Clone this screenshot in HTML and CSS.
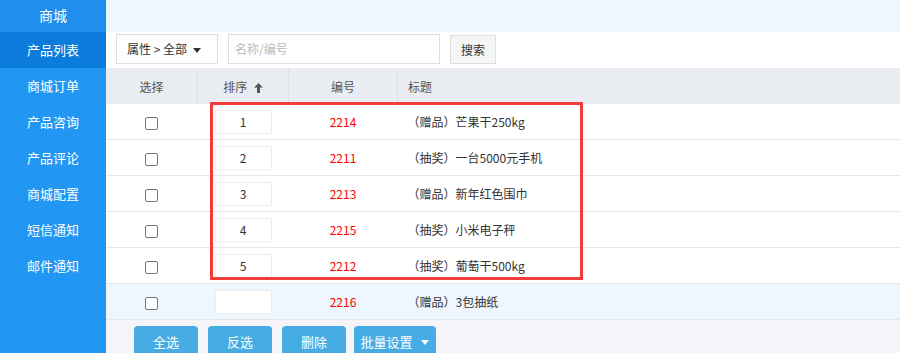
FILE: index.html
```html
<!DOCTYPE html>
<html lang="zh-CN">
<head>
  <meta charset="UTF-8">
  <title>产品列表</title>
  <link rel="stylesheet" href="styles.css">
</head>
<body>
  <div class="layout">
    <div class="sidebar">
      <div class="brand">商城</div>
      <div class="nav-item active">产品列表</div>
      <div class="nav-item">商城订单</div>
      <div class="nav-item">产品咨询</div>
      <div class="nav-item">产品评论</div>
      <div class="nav-item">商城配置</div>
      <div class="nav-item">短信通知</div>
      <div class="nav-item">邮件通知</div>
    </div>

    <div class="main">
      <div class="topbar"></div>
      <div class="toolbar">
        <div class="select">属性 &gt; 全部 <span class="caret"></span></div>
        <input class="search-input" type="text" placeholder="名称/编号">
        <button class="search-btn">搜索</button>
      </div>

      <table class="grid">
        <thead>
          <tr>
            <th class="col-check">选择</th>
            <th class="col-sort">排序 <svg class="sort-icon" width="9" height="10" viewBox="0 0 9 10"><path d="M4.5 0 L9 4.5 L6 4.5 L6 10 L3 10 L3 4.5 L0 4.5 Z" fill="#555"/></svg></th>
            <th class="col-code">编号</th>
            <th class="col-title">标题</th>
          </tr>
        </thead>
        <tbody>
          <tr>
            <td class="col-check"><span class="checkbox"></span></td>
            <td class="col-sort"><input class="sort-input" type="text" value="1"></td>
            <td class="col-code">2214</td>
            <td class="col-title">（赠品）芒果干250kg</td>
          </tr>
          <tr>
            <td class="col-check"><span class="checkbox"></span></td>
            <td class="col-sort"><input class="sort-input" type="text" value="2"></td>
            <td class="col-code">2211</td>
            <td class="col-title">（抽奖）一台5000元手机</td>
          </tr>
          <tr>
            <td class="col-check"><span class="checkbox"></span></td>
            <td class="col-sort"><input class="sort-input" type="text" value="3"></td>
            <td class="col-code">2213</td>
            <td class="col-title">（赠品）新年红色围巾</td>
          </tr>
          <tr>
            <td class="col-check"><span class="checkbox"></span></td>
            <td class="col-sort"><input class="sort-input" type="text" value="4"></td>
            <td class="col-code">2215</td>
            <td class="col-title">（抽奖）小米电子秤</td>
          </tr>
          <tr>
            <td class="col-check"><span class="checkbox"></span></td>
            <td class="col-sort"><input class="sort-input" type="text" value="5"></td>
            <td class="col-code">2212</td>
            <td class="col-title">（抽奖）葡萄干500kg</td>
          </tr>
          <tr class="hover">
            <td class="col-check"><span class="checkbox"></span></td>
            <td class="col-sort"><input class="sort-input" type="text" value=""></td>
            <td class="col-code">2216</td>
            <td class="col-title">（赠品）3包抽纸</td>
          </tr>
        </tbody>
      </table>

      <div class="footer">
        <button class="btn">全选</button>
        <button class="btn">反选</button>
        <button class="btn">删除</button>
        <button class="btn btn-wide">批量设置 <span class="caret white"></span></button>
      </div>

      <div class="highlight"></div>
    </div>
  </div>
</body>
</html>
```

FILE: styles.css
```css
body {
  margin: 0;
  font-family: "Noto Sans CJK SC", "Liberation Sans", sans-serif;
  font-size: 12px;
  color: #333;
  background: #f4f4f9;
  height: 353px;
  overflow: hidden;
}

.layout {
  display: flex;
  height: 353px;
}

.sidebar {
  width: 106px;
  flex-shrink: 0;
  background-color: #2196f3;
  color: #fff;
}

.brand {
  height: 32px;
  line-height: 30px;
  text-align: center;
  font-size: 14px;
  background-color: #1f8eed;
}

.nav-item {
  height: 36px;
  line-height: 36px;
  text-align: center;
  font-size: 13px;
}

.nav-item.active {
  background-color: #0b7cdb;
}

.main {
  flex: 1;
  position: relative;
  display: flex;
  flex-direction: column;
  overflow: hidden;
}

.main > * {
  flex-shrink: 0;
}

.topbar {
  height: 32px;
  background-color: #eef6fe;
}

.toolbar {
  height: 36px;
  background: #fff;
  display: flex;
  align-items: center;
  padding-left: 10px;
  box-sizing: border-box;
}

.select {
  width: 102px;
  height: 30px;
  box-sizing: border-box;
  border: 1px solid #ddd;
  line-height: 28px;
  padding-left: 10px;
  font-size: 12px;
  color: #333;
  margin-right: 10px;
  margin-top: -3px;
}

.caret {
  display: inline-block;
  width: 0;
  height: 0;
  border-left: 4px solid transparent;
  border-right: 4px solid transparent;
  border-top: 5px solid #333;
  vertical-align: middle;
  margin-left: 3px;
}

.caret.white {
  border-top-color: #fff;
  margin-left: 6px;
}

.search-input {
  width: 212px;
  height: 30px;
  box-sizing: border-box;
  border: 1px solid #ddd;
  padding: 0 6px;
  font-family: inherit;
  font-size: 12px;
  margin-right: 10px;
  margin-top: -3px;
  outline: none;
}

.search-input::placeholder {
  color: #bbb;
}

.search-btn {
  width: 46px;
  height: 29px;
  box-sizing: border-box;
  border: 1px solid #ddd;
  background: #f5f5f5;
  font-family: inherit;
  font-size: 12px;
  color: #333;
  padding: 0;
  margin-top: -2px;
}

.grid {
  border-collapse: collapse;
  width: 100%;
  table-layout: fixed;
  background: #fff;
}

.grid th {
  height: 36px;
  background-color: #e9ecf1;
  font-weight: normal;
  color: #555;
  border-left: 1px solid #dde1e7;
  padding: 0;
}

.grid th:first-child {
  border-left: none;
}

.grid td {
  height: 35px;
  border-bottom: 1px solid #e3e7ec;
  padding: 0;
  text-align: center;
}

.grid tr.hover td {
  background-color: #eef6fe;
}

.col-check { width: 91px; text-align: center; }
.col-sort { width: 90px; text-align: center; }
.col-code { width: 108px; }
.grid th.col-title,
.grid td.col-title {
  text-align: left;
  padding-left: 10px;
}

.grid td.col-code {
  color: #f00;
}

.sort-icon {
  vertical-align: -1px;
  margin-left: 4px;
}

.checkbox {
  display: inline-block;
  width: 11px;
  height: 11px;
  border: 1px solid #777;
  border-radius: 2px;
  vertical-align: middle;
  background: #fff;
}

.sort-input {
  width: 57px;
  height: 24px;
  box-sizing: border-box;
  border: 1px solid #eee;
  text-align: center;
  font-family: inherit;
  font-size: 12px;
  color: #333;
  padding: 0;
  vertical-align: middle;
  background: #fff;
}

.footer {
  flex: 1 1 auto;
  min-height: 0;
  background: #f4f4f9;
  padding: 6px 0 0 28px;
  display: flex;
  align-items: flex-start;
  gap: 10px;
}

.btn {
  width: 64px;
  height: 30px;
  flex-shrink: 0;
  border: none;
  border-radius: 4px;
  background-color: #46ade4;
  color: #fff;
  font-family: inherit;
  font-size: 13px;
  padding: 0;
}

.btn-wide {
  width: 82px;
  margin-left: -2px;
}

.highlight {
  position: absolute;
  left: 104px;
  top: 102px;
  width: 373px;
  height: 178px;
  box-sizing: border-box;
  border: 3px solid #f33b3b;
  pointer-events: none;
}
```
